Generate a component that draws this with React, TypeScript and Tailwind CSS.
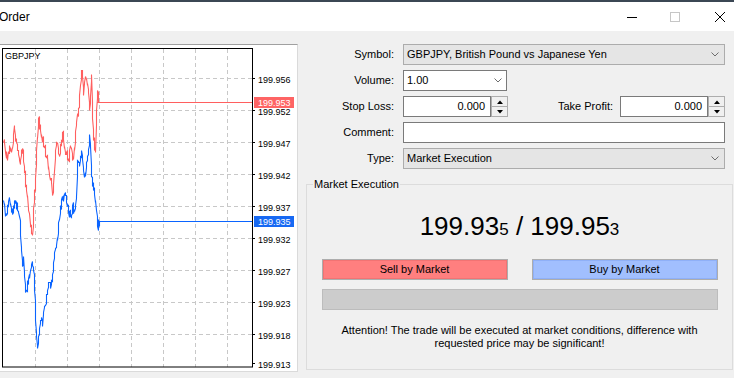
import React from "react";

type Pt = [number, number];

const redKeys: Pt[] = [
  [3, 142], [5, 152], [7, 160], [9, 145], [11, 152], [13, 134], [14, 128], [16, 142], [18, 154], [20, 160],
  [22, 148], [24, 172], [26, 190], [28, 210], [30, 226], [32, 235], [33, 208], [35, 178], [36, 150], [38, 118],
  [40, 130], [42, 138], [44, 146], [46, 156], [48, 166], [50, 178], [52, 195], [53, 184], [55, 150], [57, 142],
  [59, 156], [61, 140], [62, 132], [64, 146], [66, 152], [68, 160], [70, 146], [72, 160], [74, 150], [76, 122],
  [78, 108], [79, 95], [81, 70], [82, 76], [83, 95], [84, 82], [86, 78], [88, 92], [89, 110], [90, 96],
  [91, 74], [92, 118], [93, 140], [95, 152], [96, 110], [97, 90], [98, 102],
];

const blueKeys: Pt[] = [
  [3, 200], [5, 215], [7, 205], [9, 198], [11, 212], [13, 205], [15, 200], [17, 210], [19, 216], [20, 235],
  [21, 250], [22, 266], [23, 256], [24, 276], [25, 292], [26, 290], [28, 278], [30, 270], [31, 264], [33, 270],
  [34, 290], [35, 320], [36, 336], [37, 348], [38, 336], [39, 328], [40, 320], [42, 326], [43, 312], [45, 305],
  [47, 290], [48, 282], [50, 288], [51, 280], [53, 262], [55, 248], [57, 240], [58, 222], [60, 205], [62, 200],
  [64, 195], [66, 202], [68, 212], [70, 216], [72, 205], [74, 211], [76, 196], [77, 160], [79, 166], [81, 150],
  [83, 170], [85, 176], [87, 156], [89, 134], [90, 146], [91, 176], [93, 190], [95, 200], [96, 210], [97, 226],
  [99, 221],
];

function noise(v: number) {
  const s = Math.sin(v * 12.9898) * 43758.5453;
  return s - Math.floor(s) - 0.5;
}

function buildPath(keys: Pt[], seed: number) {
  const pts: string[] = [];
  for (let i = 0; i < keys.length - 1; i++) {
    const [x0, y0] = keys[i];
    const [x1, y1] = keys[i + 1];
    const steps = Math.max(1, Math.round(x1 - x0) * 2);
    for (let s = 0; s < steps; s++) {
      const t = s / steps;
      const x = Math.round(x0 + (x1 - x0) * t);
      const n = s === 0 ? 0 : noise(x * 3.1 + s + seed) * 12;
      pts.push(`${x + 0.5},${Math.round(y0 + (y1 - y0) * t + n) + 0.5}`);
    }
  }
  const last = keys[keys.length - 1];
  pts.push(`${last[0] + 0.5},${last[1] + 0.5}`);
  return "M" + pts.join(" L");
}

const hGrid = [78, 110, 142, 174, 206, 238, 270, 302, 334];
const vGrid = [35, 67, 99, 131, 163, 195, 227];
const axis: [number, string][] = [
  [78, "199.956"], [110, "199.952"], [142, "199.947"], [174, "199.942"], [206, "199.937"],
  [238, "199.932"], [270, "199.927"], [302, "199.923"], [334, "199.918"], [363, "199.913"],
];

function Chart() {
  const red = buildPath(redKeys, 1.7);
  const blue = buildPath(blueKeys, 5.3);
  return (
    <svg width={296} height={326} className="block" fontFamily="Liberation Sans, Arial, sans-serif">
      <g transform="translate(0,-45)">
        {hGrid.map((y) => (
          <line key={"h" + y} x1={3} x2={252} y1={y + 0.5} y2={y + 0.5} stroke="#c8c8c8" strokeDasharray="4 3" />
        ))}
        {vGrid.map((x) => (
          <line key={"v" + x} x1={x + 0.5} x2={x + 0.5} y1={49} y2={367} stroke="#c8c8c8" strokeDasharray="4 3" />
        ))}
        <path d={red} fill="none" stroke="#ff5f5f" strokeWidth={1.1} strokeLinejoin="miter" />
        <path d={blue} fill="none" stroke="#0a64ff" strokeWidth={1.1} strokeLinejoin="miter" />
        <line x1={97} x2={252} y1={102.5} y2={102.5} stroke="#ff5f5f" />
        <line x1={99} x2={252} y1={221.5} y2={221.5} stroke="#0a64ff" />
        <rect x={2.5} y={48.5} width={250} height={318.5} fill="none" stroke="#000" />
        {axis.map(([y, t]) => (
          <g key={t}>
            <line x1={253} x2={255} y1={y + 0.5} y2={y + 0.5} stroke="#000" />
            <text x={258} y={y + 4.5} fontSize={9} fill="#000">
              {t}
            </text>
          </g>
        ))}
        <rect x={254} y={97} width={40} height={11} fill="#fe6464" />
        <text x={258} y={106} fontSize={9} fill="#fff">
          199.953
        </text>
        <rect x={254} y={216} width={40} height={11} fill="#1769f3" />
        <text x={258} y={225} fontSize={9} fill="#fff">
          199.935
        </text>
        <text x={5} y={58.5} fontSize={9} fill="#000">
          GBPJPY
        </text>
      </g>
    </svg>
  );
}

function Chevron() {
  return (
    <svg width={8} height={5} viewBox="0 0 8 5" className="block">
      <path d="M0.5 0.5 L4 4 L7.5 0.5" fill="none" stroke="#6d6d6d" strokeWidth={1} />
    </svg>
  );
}

function Spinner() {
  return (
    <div className="w-[17px] h-[21px] border border-[#adadad] bg-[#f0f0f0] flex flex-col">
      <div className="flex-1 flex items-center justify-center border-b border-[#adadad]">
        <svg width={6} height={4} className="block">
          <path d="M0 4 L3 0.5 L6 4 Z" fill="#000" />
        </svg>
      </div>
      <div className="flex-1 flex items-center justify-center">
        <svg width={6} height={4} className="block">
          <path d="M0 0 L3 3.5 L6 0 Z" fill="#000" />
        </svg>
      </div>
    </div>
  );
}

export default function App() {
  return (
    <div className="w-[734px] h-[378px] overflow-hidden bg-[#f0f0f0] font-['Liberation_Sans',Arial,sans-serif] text-[11px] text-black flex flex-col">
      <div className="h-[2px] bg-[#3b4754]" />
      <div className="h-[29px] bg-white flex items-center">
        <span className="ml-[-1px] text-[12px] leading-none">Order</span>
        <div className="ml-auto flex items-center mr-[9px]">
          <svg width={10} height={10} className="block">
            <line x1={0} x2={10} y1={5.5} y2={5.5} stroke="#000" />
          </svg>
          <svg width={10} height={10} className="block ml-[33px]">
            <rect x={0.5} y={0.5} width={9} height={9} fill="none" stroke="#c6c6c6" />
          </svg>
          <svg width={10} height={10} className="block ml-[35px]">
            <path d="M0 0 L10 10 M10 0 L0 10" stroke="#000" strokeWidth={1} />
          </svg>
        </div>
      </div>

      <div className="flex pt-[13px]">
        <div className="w-[298px] h-[328px] bg-white border-t border-t-[#a0a0a0] border-r border-r-[#dadada] border-b border-b-[#dadada]">
          <Chart />
        </div>

        <div className="ml-[8px] w-[427px] flex flex-col">
          <div className="w-[419px] flex flex-col gap-[5px]">
            <div className="flex items-center h-[21px]">
              <div className="w-[88px] text-right">Symbol:</div>
              <div className="ml-[9px] w-[322px] h-[21px] bg-[#e5e5e5] border border-[#acacac] flex items-center pl-[3px] pr-[5px]">
                <span>GBPJPY, British Pound vs Japanese Yen</span>
                <span className="ml-auto">
                  <Chevron />
                </span>
              </div>
            </div>
            <div className="flex items-center h-[21px]">
              <div className="w-[88px] text-right">Volume:</div>
              <div className="ml-[9px] w-[104px] h-[21px] bg-white border border-[#7a7a7a] flex items-center pl-[3px] pr-[4px]">
                <span>1.00</span>
                <span className="ml-auto">
                  <Chevron />
                </span>
              </div>
            </div>
            <div className="flex items-center h-[21px]">
              <div className="w-[88px] text-right">Stop Loss:</div>
              <div className="ml-[9px] w-[88px] h-[21px] bg-white border border-[#7a7a7a] flex items-center justify-end pr-[5px]">
                0.000
              </div>
              <Spinner />
              <div className="flex-1 text-right pr-[7px]">Take Profit:</div>
              <div className="w-[88px] h-[21px] bg-white border border-[#7a7a7a] flex items-center justify-end pr-[5px]">
                0.000
              </div>
              <Spinner />
            </div>
            <div className="flex items-center h-[21px]">
              <div className="w-[88px] text-right">Comment:</div>
              <div className="ml-[9px] w-[322px] h-[21px] bg-white border border-[#7a7a7a]" />
            </div>
            <div className="flex items-center h-[21px]">
              <div className="w-[88px] text-right">Type:</div>
              <div className="ml-[9px] w-[322px] h-[21px] bg-[#e5e5e5] border border-[#acacac] flex items-center pl-[3px] pr-[5px]">
                <span>Market Execution</span>
                <span className="ml-auto">
                  <Chevron />
                </span>
              </div>
            </div>
          </div>

          <div className="relative mt-[15px] w-[427px] h-[186px] border border-[#dcdcdc] flex flex-col items-center">
            <span className="absolute top-[-7px] left-[6px] px-[1px] bg-[#f0f0f0] leading-[13px]">Market Execution</span>
            <div className="mt-[28px] h-[26px] leading-[26px] text-[26px] whitespace-nowrap">
              199.93<span className="text-[17px]">5</span> / 199.95<span className="text-[17px]">3</span>
            </div>
            <div className="mt-[20px] flex gap-[24px]">
              <div className="w-[186px] h-[21px] border border-[#adadad] bg-[#ff7f7f] shadow-[inset_0_0_0_1px_#f27373] flex items-center justify-center">
                Sell by Market
              </div>
              <div className="w-[186px] h-[21px] border border-[#adadad] bg-[#a1bffe] shadow-[inset_0_0_0_1px_#8fb0f7] flex items-center justify-center">
                Buy by Market
              </div>
            </div>
            <div className="mt-[9px] w-[396px] h-[21px] bg-[#cccccc] border border-[#bcbcbc]" />
            <div className="mt-[14px] text-center leading-[13px]">
              Attention! The trade will be executed at market conditions, difference with
              <br />
              requested price may be significant!
            </div>
          </div>
        </div>
      </div>
    </div>
  );
}
